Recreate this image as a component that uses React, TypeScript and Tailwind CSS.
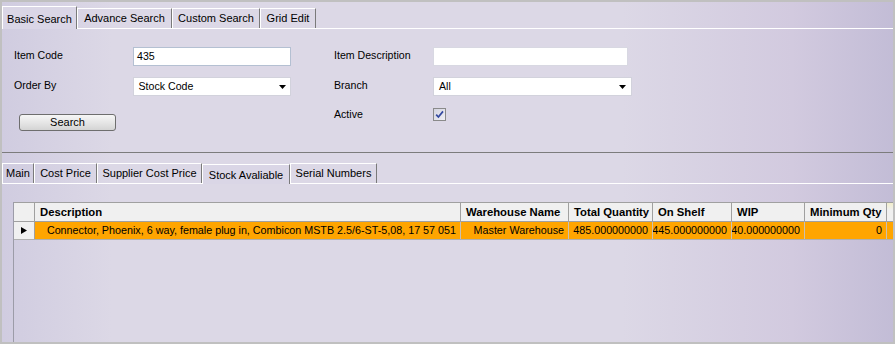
import React from 'react'

const font = "font-['Liberation_Sans',Arial,sans-serif]"

interface Tab {
  label: string
  w: string
  active?: boolean
}

const searchTabs: Tab[] = [
  { label: 'Basic Search', w: 'w-[75px]', active: true },
  { label: 'Advance Search', w: 'w-[95px]' },
  { label: 'Custom Search', w: 'w-[88px]' },
  { label: 'Grid Edit', w: 'w-[56px]' },
]

const detailTabs: Tab[] = [
  { label: 'Main', w: 'w-[32px]' },
  { label: 'Cost Price', w: 'w-[63px]' },
  { label: 'Supplier Cost Price', w: 'w-[105px]' },
  { label: 'Stock Avaliable', w: 'w-[88px]', active: true },
  { label: 'Serial Numbers', w: 'w-[87px]' },
]

const columns = [
  { label: 'Description', w: 'w-[426px]', value: 'Connector, Phoenix, 6 way, female plug in, Combicon MSTB 2.5/6-ST-5,08, 17 57 051' },
  { label: 'Warehouse Name', w: 'w-[108px]', value: 'Master Warehouse' },
  { label: 'Total Quantity', w: 'w-[84px]', value: '485.000000000' },
  { label: 'On Shelf', w: 'w-[79px]', value: '445.000000000' },
  { label: 'WIP', w: 'w-[73px]', value: '40.000000000' },
  { label: 'Minimum Qty', w: 'w-[82px]', value: '0' },
]

function TabStrip({ tabs, height, tall }: { tabs: Tab[]; height: string; tall: boolean }) {
  return (
    <div className={`flex items-end border-b border-white ${height}`}>
      {tabs.map((tab) =>
        tab.active ? (
          <div
            key={tab.label}
            className={`${tab.w} ${tall ? 'h-[23px] pt-[2px]' : 'h-[20px] pt-[1px]'} -mb-px flex items-center justify-center border-l border-t border-white border-r border-r-[#7a7a7a] bg-[#dad6e6] text-[11px] text-black whitespace-nowrap`}
          >
            {tab.label}
          </div>
        ) : (
          <div
            key={tab.label}
            className={`${tab.w} h-[20px] flex items-center justify-center border-l border-t border-white border-r border-r-[#7a7a7a] text-[11px] text-black whitespace-nowrap`}
          >
            {tab.label}
          </div>
        )
      )}
    </div>
  )
}

function DropArrow() {
  return (
    <svg width="7" height="4" viewBox="0 0 7 4" className="shrink-0">
      <polygon points="0,0 7,0 3.5,4" fill="#000" />
    </svg>
  )
}

export default function App() {
  return (
    <div
      className={`${font} w-[895px] h-[344px] flex flex-col overflow-hidden border-2 border-[#c0c0c0] bg-[linear-gradient(to_right,#d0cce0_0px,#dcd8e6_110px,#dcd8e6_620px,#d2cadf_790px,#c2bcd6_895px)] text-black`}
    >
      {/* search tabs */}
      <TabStrip tabs={searchTabs} height="h-[27px]" tall />

      {/* search form */}
      <div className="h-[124px] shrink-0 border-b border-[#7c7c7c] flex pt-[18px] pl-[12px] text-[10.6px]">
        <div className="flex flex-col w-[277px]">
          <div className="flex items-center h-[19px]">
            <span className="w-[119px] pb-px">Item Code</span>
            <div className="w-[158px] h-[19px] flex items-center pl-[3px] bg-white border border-[#b4c0d2]">435</div>
          </div>
          <div className="flex items-center h-[19px] mt-[11px]">
            <span className="w-[119px] pb-px">Order By</span>
            <div className="w-[159px] h-[19px] flex items-center justify-between pl-[5px] pr-[4px] bg-white border border-[#d2d2dc]">
              <span>Stock Code</span>
              <DropArrow />
            </div>
          </div>
          <button className="mt-[18px] ml-[5px] w-[97px] h-[17px] rounded-[3px] border border-[#6e6e6e] bg-[linear-gradient(to_bottom,#f6f6f6,#e6e6e6_50%,#d4d4d4)] text-[11px] leading-none">
            Search
          </button>
        </div>

        <div className="flex flex-col ml-[43px]">
          <div className="flex items-center h-[19px]">
            <span className="w-[99px] pb-px">Item Description</span>
            <div className="w-[195px] h-[19px] bg-white border border-[#d8d8e2]" />
          </div>
          <div className="flex items-center h-[19px] mt-[11px]">
            <span className="w-[99px] pb-px">Branch</span>
            <div className="w-[199px] h-[19px] flex items-center justify-between pl-[5px] pr-[5px] bg-white border border-[#d2d2dc]">
              <span>All</span>
              <DropArrow />
            </div>
          </div>
          <div className="flex items-center h-[13px] mt-[12px]">
            <span className="w-[99px]">Active</span>
            <div className="w-[13px] h-[13px] border border-[#8a8a8a] bg-[linear-gradient(135deg,#d4d4e0,#eeeef4)] flex items-center justify-center">
              <svg width="11" height="11" viewBox="0 0 11 11">
                <path d="M2.2 5.6 L4.4 8 L9 2.4" fill="none" stroke="#3348a0" strokeWidth="1.7" />
              </svg>
            </div>
          </div>
        </div>
      </div>

      {/* detail tabs */}
      <TabStrip tabs={detailTabs} height="h-[31px]" tall={false} />

      {/* stock grid */}
      <div className="mt-[18px] ml-[11px] flex-1 border-l border-[#9c9ca8] overflow-hidden">
        <div className="flex h-[20px] border-t border-b border-[#a0a0a0] bg-[#f0f0f0] text-[11.3px] font-bold whitespace-nowrap">
          <div className="w-[21px] shrink-0 border-r border-[#a0a0a0]" />
          {columns.map((c) => (
            <div key={c.label} className={`${c.w} shrink-0 flex items-center pl-[5px] border-r border-[#a0a0a0] overflow-hidden`}>
              {c.label}
            </div>
          ))}
          <div className="w-[20px] shrink-0 bg-[linear-gradient(to_bottom,#f2eecc,#f0f0f0_40%)]" />
        </div>
        <div className="flex h-[18px] border-b border-[#b0b0b0] text-[10.75px] whitespace-nowrap">
          <div className="w-[21px] shrink-0 flex items-center justify-center border-r border-[#a0a0a0] bg-[#f0f0f0]">
            <svg width="6" height="7" viewBox="0 0 6 7">
              <polygon points="0,0 6,3.5 0,7" fill="#000" />
            </svg>
          </div>
          {columns.map((c) => (
            <div key={c.label} className={`${c.w} shrink-0 flex items-center justify-end pr-[4px] border-r border-[#c8c0b4] bg-[#ffa500] overflow-hidden`}>
              {c.value}
            </div>
          ))}
          <div className="w-[20px] shrink-0 bg-[#ffa500]" />
        </div>
      </div>
    </div>
  )
}
